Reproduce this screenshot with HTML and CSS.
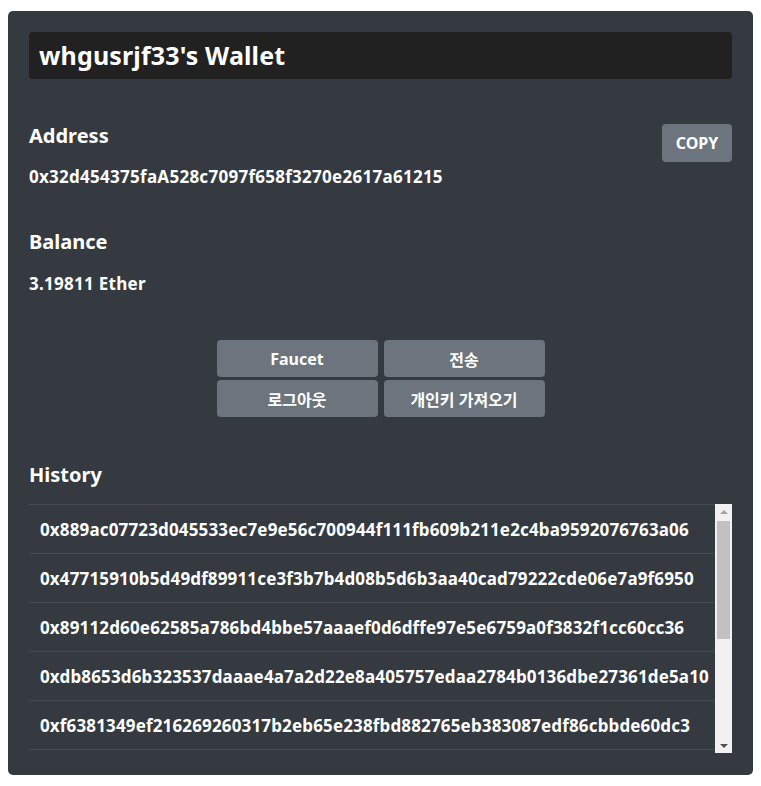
FILE: index.html
```html
<!DOCTYPE html>
<html lang="ko">
<head>
<meta charset="utf-8">
<title>Wallet</title>
<link rel="stylesheet" href="styles.css">
</head>
<body>
<div class="card">
  <div class="title-box"><h1 class="title">whgusrjf33's Wallet</h1></div>

  <section class="section address">
    <div class="section-head">
      <h2 class="label">Address</h2>
      <button class="btn copy">COPY</button>
    </div>
    <p class="value">0x32d454375faA528c7097f658f3270e2617a61215</p>
  </section>

  <section class="section balance">
    <h2 class="label">Balance</h2>
    <p class="value">3.19811 Ether</p>
  </section>

  <div class="actions">
    <button class="btn action">Faucet</button>
    <button class="btn action">전송</button>
    <button class="btn action">로그아웃</button>
    <button class="btn action">개인키 가져오기</button>
  </div>

  <section class="history">
    <h2 class="label">History</h2>
    <div class="scroll-box">
      <ul class="tx-list">
        <li class="tx">0x889ac07723d045533ec7e9e56c700944f111fb609b211e2c4ba9592076763a06</li>
        <li class="tx">0x47715910b5d49df89911ce3f3b7b4d08b5d6b3aa40cad79222cde06e7a9f6950</li>
        <li class="tx">0x89112d60e62585a786bd4bbe57aaaef0d6dffe97e5e6759a0f3832f1cc60cc36</li>
        <li class="tx">0xdb8653d6b323537daaae4a7a2d22e8a405757edaa2784b0136dbe27361de5a10</li>
        <li class="tx">0xf6381349ef216269260317b2eb65e238fbd882765eb383087edf86cbbde60dc3</li>
      </ul>
      <div class="scrollbar" aria-hidden="true">
        <span class="sb-arrow sb-up"></span>
        <span class="sb-track"><span class="sb-thumb"></span></span>
        <span class="sb-arrow sb-down"></span>
      </div>
    </div>
  </section>
</div>
</body>
</html>
```

FILE: styles.css
```css
* { box-sizing: border-box; }

html, body {
  margin: 0;
  padding: 0;
  background: #ffffff;
}

body {
  font-family: "Noto Sans", "Noto Sans CJK KR", sans-serif;
  font-weight: 700;
  color: #ffffff;
}

.card {
  margin: 11px 8px 0;
  padding: 21px 21px 22px;
  background: #343a40;
  border-radius: 5px;
}

.title-box {
  height: 47px;
  background: #212121;
  border-radius: 4px;
  padding: 0 10px;
  display: flex;
  align-items: center;
}

.title {
  margin: 0;
  font-size: 25px;
  line-height: 1;
  font-weight: 700;
  letter-spacing: 0.15px;
}

.section {
  margin-top: 45px;
}

.section-head {
  display: flex;
  justify-content: space-between;
  align-items: flex-start;
}

.label {
  margin: 0;
  font-size: 20px;
  line-height: 24px;
  font-weight: 700;
}

.value {
  margin: 20px 0 0;
  font-size: 17px;
  line-height: 20px;
  letter-spacing: 0.27px;
}

.address .value { margin-top: 5px; }

.btn {
  font-family: inherit;
  font-weight: 700;
  color: #ffffff;
  background: #6c757d;
  border: 0;
  border-radius: 4px;
  padding: 0;
  cursor: pointer;
}

.copy {
  width: 70px;
  height: 38px;
  font-size: 16px;
}

.balance { margin-top: 43px; }

.actions {
  margin: 46px auto 0;
  width: 328px;
  display: grid;
  grid-template-columns: 161px 161px;
  column-gap: 6px;
  row-gap: 3px;
}

.action {
  height: 37px;
  font-size: 16px;
}

.history {
  margin-top: 46px;
}

.scroll-box {
  margin-top: 17px;
  height: 249px;
  display: flex;
}

.tx-list {
  flex: 1;
  list-style: none;
  margin: 0;
  padding: 0;
  overflow: hidden;
  border-top: 1px solid #454d55;
}

.tx {
  height: 49px;
  padding: 0 11px;
  display: flex;
  align-items: center;
  font-size: 17px;
  letter-spacing: 0.15px;
  border-bottom: 1px solid #454d55;
  white-space: nowrap;
}

.scrollbar {
  width: 17px;
  background: #f1f1f1;
  display: flex;
  flex-direction: column;
}

.sb-arrow {
  height: 15px;
  display: flex;
  align-items: center;
  justify-content: center;
}

.sb-arrow::before {
  content: "";
  width: 0;
  height: 0;
  border-left: 4px solid transparent;
  border-right: 4px solid transparent;
}

.sb-up::before { border-bottom: 4px solid #a3a3a3; }
.sb-down::before { border-top: 4px solid #505050; }

.sb-track {
  flex: 1;
  padding: 2px 2px 0;
}

.sb-thumb {
  display: block;
  height: 118px;
  background: #c1c1c1;
}
```
